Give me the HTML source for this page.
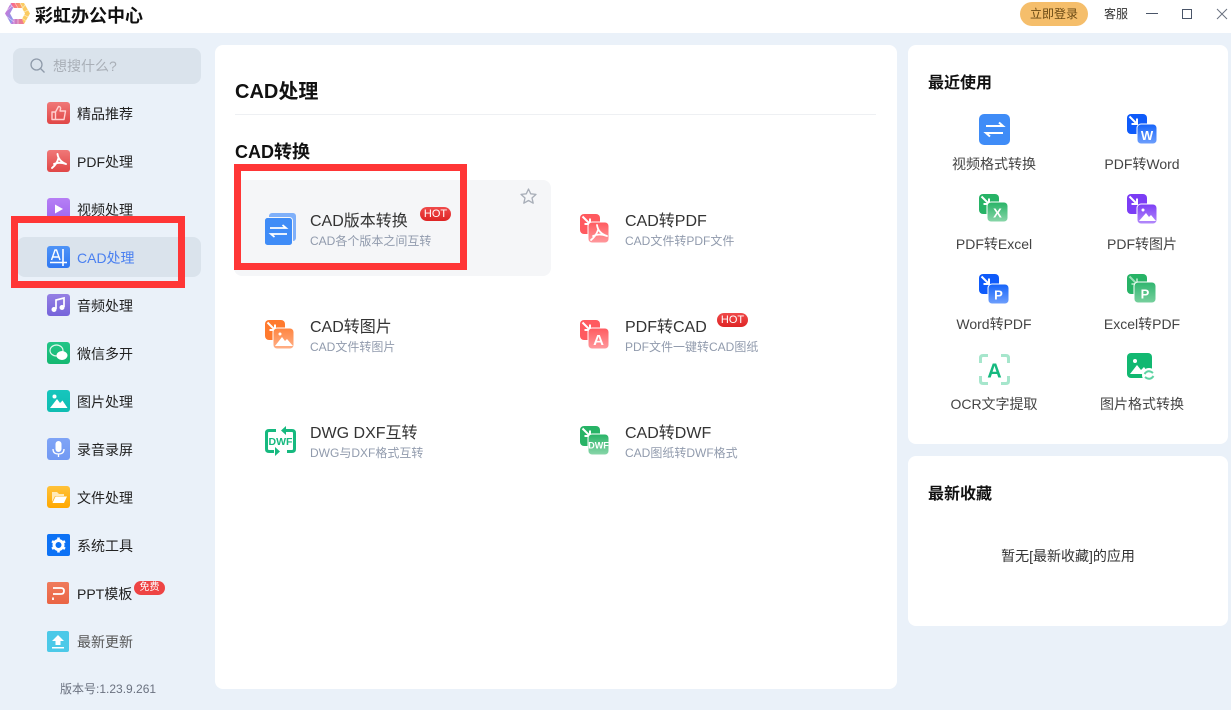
<!DOCTYPE html>
<html lang="zh-CN"><head><meta charset="utf-8"><title>彩虹办公中心</title>
<style>
*{box-sizing:border-box}
html,body{margin:0;padding:0}
body{width:1231px;height:710px;position:relative;overflow:hidden;background:#EAF1F9;font-family:"Liberation Sans","Noto Sans CJK SC",sans-serif;color:#222}
.a{position:absolute}
.t{position:absolute;white-space:nowrap;line-height:20px}
svg{position:absolute;display:block;overflow:visible}
svg text{font-family:"Liberation Sans",sans-serif;font-weight:700;text-anchor:middle}
.nav{left:77px;font-size:14px;color:#222}
.ti{font-size:16px;color:#333}
.su{font-size:12px;color:#919BAD}
.lb{font-size:14px;color:#444;width:148px;text-align:center}
.hot{position:absolute;width:31px;height:14px;border-radius:7px;background:linear-gradient(#F04A4A,#DE2424);color:#fff;font-size:11px;line-height:14px;text-align:center}
.panel{position:absolute;background:#fff;border-radius:8px}
.red{position:absolute;border:7px solid #FF3636}
</style></head><body>
<svg width="0" height="0" style="left:0;top:0"><defs>
<linearGradient id="g1" x1="0" x2="0" y1="0" y2="1"><stop offset="0" stop-color="#F07878"/><stop offset="1" stop-color="#E04646"/></linearGradient>
<linearGradient id="g2" x1="0" x2="0" y1="0" y2="1"><stop offset="0" stop-color="#B67FF5"/><stop offset="1" stop-color="#A066EE"/></linearGradient>
<linearGradient id="g3" x1="0" x2="0" y1="0" y2="1"><stop offset="0" stop-color="#4F94F7"/><stop offset="1" stop-color="#2F78F2"/></linearGradient>
<linearGradient id="g4" x1="0" x2="0" y1="0" y2="1"><stop offset="0" stop-color="#9580E4"/><stop offset="1" stop-color="#7664DA"/></linearGradient>
<linearGradient id="g5" x1="0" x2="0" y1="0" y2="1"><stop offset="0" stop-color="#22C588"/><stop offset="1" stop-color="#14B871"/></linearGradient>
<linearGradient id="g6" x1="0" x2="0" y1="0" y2="1"><stop offset="0" stop-color="#16C6BD"/><stop offset="1" stop-color="#0FBDB2"/></linearGradient>
<linearGradient id="g7" x1="0" x2="0" y1="0" y2="1"><stop offset="0" stop-color="#7FA4F6"/><stop offset="1" stop-color="#7299F3"/></linearGradient>
<linearGradient id="g8" x1="0" x2="0" y1="0" y2="1"><stop offset="0" stop-color="#FFC23A"/><stop offset="1" stop-color="#FFA800"/></linearGradient>
<linearGradient id="g9" x1="0" x2="0" y1="0" y2="1"><stop offset="0" stop-color="#EF7B5C"/><stop offset="1" stop-color="#EA6544"/></linearGradient>
<linearGradient id="g10" x1="0" x2="0" y1="0" y2="1"><stop offset="0" stop-color="#FF5A5F"/><stop offset="1" stop-color="#FF9A9E"/></linearGradient>
<linearGradient id="g11" x1="0" x2="0" y1="0" y2="1"><stop offset="0" stop-color="#FF8540"/><stop offset="1" stop-color="#FFB088"/></linearGradient>
<linearGradient id="g12" x1="0" x2="0" y1="0" y2="1"><stop offset="0" stop-color="#27B366"/><stop offset="1" stop-color="#8AD6AA"/></linearGradient>
<linearGradient id="g13" x1="0" x2="0" y1="0" y2="1"><stop offset="0" stop-color="#1463FA"/><stop offset="1" stop-color="#6FA0FC"/></linearGradient>
<linearGradient id="g14" x1="0" x2="0" y1="0" y2="1"><stop offset="0" stop-color="#7C3DF5"/><stop offset="1" stop-color="#B48CFA"/></linearGradient>
<linearGradient id="g15" x1="0" x2="0" y1="0" y2="1"><stop offset="0" stop-color="#30B56F"/><stop offset="1" stop-color="#78D09E"/></linearGradient>
<linearGradient id="lgL" x1="0" x2="1" y1="0" y2="1"><stop offset="0" stop-color="#E56BD0"/><stop offset="1" stop-color="#6FA5F2"/></linearGradient>
<linearGradient id="lgT" x1="0" x2="1" y1="0" y2="0"><stop offset="0" stop-color="#F65E9A"/><stop offset="1" stop-color="#FBA45A"/></linearGradient>
<linearGradient id="lgB" x1="0" x2="1" y1="0" y2="0"><stop offset="0" stop-color="#B77BEA"/><stop offset="1" stop-color="#F77D7D"/></linearGradient>
</defs></svg>
<div class="a" style="left:0;top:0;width:1231px;height:33px;background:#fff"></div>
<svg style="left:0;top:0" width="36" height="28">
<path d="M11 3L14 8L13 8L10 13.500L13 19L11 24L5 13.500Z" fill="url(#lgL)"/>
<path d="M11 3H20L22 8H13Z" fill="url(#lgT)"/>
<path d="M20 3H24L30 13.500L24 24L22 19L25 13.500L22 8Z" fill="#FBCB62"/>
<path d="M11 24L13 19H22L24 24Z" fill="url(#lgB)"/>
<path d="M6 16L14 22M5 12L12 6M10 4L14 8M15 3L18 8M20 3L23 8M25 5L22 9M28 10L24 12M28 17L24 15M26 21L22 18M18 19V24M14 19V24" stroke="#fff" stroke-width=".7" opacity=".6" fill="none"/>
</svg>
<div class="t" style="left:35px;top:6px;font-size:18px;font-weight:700;color:#111">彩虹办公中心</div>
<div class="a" style="left:1020px;top:2px;width:68px;height:24px;border-radius:12px;background:#F5BE6B;color:#6B4A14;font-size:12px;line-height:24px;text-align:center">立即登录</div>
<div class="t" style="left:1104px;top:4px;font-size:12px;color:#333">客服</div>
<div class="a" style="left:1146px;top:13px;width:12px;height:1px;background:#4A5568"></div>
<div class="a" style="left:1182px;top:9px;width:10px;height:10px;border:1px solid #4A5568"></div>
<svg style="left:1217px;top:9px" width="10" height="10"><path d="M0 0L10 10M10 0L0 10" stroke="#6B7280" stroke-width="1" fill="none"/></svg>

<div class="a" style="left:13px;top:48px;width:188px;height:36px;border-radius:8px;background:#DAE3EC"></div>
<svg style="left:30px;top:58px" width="15" height="15"><circle cx="6.500" cy="6.500" r="5.500" fill="none" stroke="#8F9BAA" stroke-width="1.300"/><path d="M10.500 10.500L14.500 14.500" stroke="#8F9BAA" stroke-width="1.300"/></svg>
<div class="t" style="left:53px;top:56px;font-size:14px;color:#A9AFB7">想搜什么?</div>

<div class="a" style="left:17px;top:237px;width:184px;height:40px;border-radius:8px;background:#DAE3EC"></div>

<svg style="left:47px;top:102px" width="23" height="22"><rect width="23" height="22" rx="3" fill="url(#g1)"/><path d="M5 10H8.500V17.500H5ZM8.500 10L11.500 4.500Q14 4.500 13.500 7L13 9H18.500L17 17.500H8.500" fill="none" stroke="#FFD0D0" stroke-width="1.400" stroke-linejoin="round"/></svg>
<div class="t nav" style="top:104px">精品推荐</div>
<svg style="left:47px;top:150px" width="23" height="22"><rect width="23" height="22" rx="3" fill="url(#g1)"/><path d="M10.500 4Q11.500 11 19 14M11.500 8Q10 14 5 18M7 14Q12 11.500 19 14" fill="none" stroke="#fff" stroke-width="1.900" stroke-linecap="round"/></svg>
<div class="t nav" style="top:152px">PDF处理</div>
<svg style="left:47px;top:198px" width="23" height="22"><rect width="23" height="22" rx="3" fill="url(#g2)"/><path d="M8 6.500L16 11L8 15.500Z" fill="#fff"/></svg>
<div class="t nav" style="top:200px">视频处理</div>
<svg style="left:47px;top:246px" width="23" height="22"><rect width="23" height="22" rx="3" fill="url(#g3)"/><path d="M3 16.500H20M16 3V20" stroke="#fff" stroke-width="1.600"/><path d="M4.500 14L8 4H9.500L13 14M5.800 11H11.700" fill="none" stroke="#fff" stroke-width="1.400"/></svg>
<div class="t nav" style="top:248px;color:#4A80F0">CAD处理</div>
<svg style="left:47px;top:294px" width="23" height="22"><rect width="23" height="22" rx="3" fill="url(#g4)"/><path d="M9 15V6L17 4V13" fill="none" stroke="#fff" stroke-width="1.700"/><circle cx="7" cy="15.500" r="2.500" fill="#fff"/><circle cx="15" cy="13.500" r="2.500" fill="#fff"/></svg>
<div class="t nav" style="top:296px">音频处理</div>
<svg style="left:47px;top:342px" width="23" height="22"><rect width="23" height="22" rx="3" fill="url(#g5)"/><ellipse cx="9.500" cy="8.500" rx="6.500" ry="5.500" fill="none" stroke="#DFF7EC" stroke-width="1.200"/><ellipse cx="15" cy="13.500" rx="5.500" ry="4.500" fill="#fff"/></svg>
<div class="t nav" style="top:344px">微信多开</div>
<svg style="left:47px;top:390px" width="23" height="22"><rect width="23" height="22" rx="3" fill="url(#g6)"/><circle cx="7.500" cy="6.500" r="2" fill="#fff"/><path d="M3 18L10 9L13 13L15.500 10.500L20.500 18Z" fill="#fff"/></svg>
<div class="t nav" style="top:392px">图片处理</div>
<svg style="left:47px;top:438px" width="23" height="22"><rect width="23" height="22" rx="3" fill="url(#g7)"/><rect x="8.500" y="3" width="6" height="11" rx="3" fill="#fff"/><path d="M6 11Q6 16 11.500 16Q17 16 17 11M11.500 16V19" fill="none" stroke="#fff" stroke-width="1.300"/></svg>
<div class="t nav" style="top:440px">录音录屏</div>
<svg style="left:47px;top:486px" width="23" height="22"><rect width="23" height="22" rx="3" fill="url(#g8)"/><path d="M5 16V6H10L12 8H17V10H8L5 16Z" fill="#FFE9B8"/><path d="M5.500 17L8.500 10.500H20L17 17Z" fill="#fff"/></svg>
<div class="t nav" style="top:488px">文件处理</div>
<svg style="left:47px;top:534px" width="23" height="22"><rect width="23" height="22" rx="2" fill="#0D72F5"/><circle cx="11.500" cy="11" r="4.500" fill="none" stroke="#fff" stroke-width="3"/><path d="M11.500 3.500V6.500M11.500 15.500V18.500M5 7.200L7.600 8.700M15.400 13.300L18 14.800M5 14.800L7.600 13.300M15.400 8.700L18 7.200" stroke="#fff" stroke-width="2.600"/></svg>
<div class="t nav" style="top:536px">系统工具</div>
<svg style="left:47px;top:582px" width="22" height="22"><rect width="22" height="22" rx="2" fill="url(#g9)"/><path d="M6 6H14Q17 6 17 9Q17 12 14 12H6M6 15.500V18" fill="none" stroke="#fff" stroke-width="1.800"/></svg>
<div class="t nav" style="top:584px">PPT模板</div>
<div class="a" style="left:134px;top:581px;width:31px;height:14px;border-radius:7px;background:#EE4444;color:#fff;font-size:10px;line-height:14px;text-align:center">免费</div>
<svg style="left:47px;top:631px" width="22" height="21"><rect width="22" height="21" rx="2" fill="#4CC9E8"/><path d="M11 4L17 10H13.500V14H8.500V10H5Z" fill="#fff"/><rect x="5" y="16" width="12" height="1.500" fill="#fff"/></svg>
<div class="t nav" style="top:632px;color:#555">最新更新</div>
<div class="t" style="left:60px;top:679px;font-size:12px;color:#6B7280">版本号:1.23.9.261</div>

<div class="panel" style="left:215px;top:45px;width:682px;height:644px"></div>
<div class="t" style="left:235px;top:82px;font-size:20px;font-weight:700;color:#111">CAD处理</div>
<div class="a" style="left:235px;top:114px;width:641px;height:1px;background:#EEF0F3"></div>
<div class="t" style="left:235px;top:142px;font-size:18px;font-weight:700;color:#111">CAD转换</div>

<div class="a" style="left:234px;top:180px;width:317px;height:96px;border-radius:8px;background:#F5F6F8"></div>
<svg style="left:520px;top:188px" width="17" height="16" viewBox="0 0 17 16"><path d="M8.500 1L10.700 5.800L16 6.400L12 10L13.200 15.200L8.500 12.500L3.800 15.200L5 10L1 6.400L6.300 5.800Z" fill="none" stroke="#A8AEB8" stroke-width="1.300" stroke-linejoin="round"/></svg>

<svg style="left:265px;top:213px" width="31" height="32"><rect x="4" y="0" width="27" height="28" rx="3" fill="#7FB0FA"/><rect x="-.5" y="4.500" width="28" height="28" rx="3" fill="#3F8CF7" stroke="#F5F6F8"/><path d="M5 15H21L17.500 12M22 21H6L9.500 24" fill="none" stroke="#fff" stroke-width="1.800"/></svg>
<div class="t ti" style="left:310px;top:212px">CAD版本转换</div>
<div class="t su" style="left:310px;top:231px">CAD各个版本之间互转</div>
<div class="hot" style="left:420px;top:207px">HOT</div>

<svg style="left:580px;top:214px" width="29" height="29"><rect width="20" height="20" rx="4" fill="#FF5A5F"/><path d="M2.500 2.500L10 10M10 4.500V10H4.500" fill="none" stroke="#fff" stroke-width="2"/><rect x="8" y="8" width="21" height="21" rx="4" fill="url(#g10)" stroke="#fff"/><path d="M17 11Q18 19 27 22M18 16Q16 22 11 26M13 22Q19 19 27 22" fill="none" stroke="#fff" stroke-width="1.800" stroke-linecap="round"/></svg>
<div class="t ti" style="left:625px;top:212px">CAD转PDF</div>
<div class="t su" style="left:625px;top:231px">CAD文件转PDF文件</div>

<svg style="left:265px;top:320px" width="29" height="29"><rect width="20" height="20" rx="4" fill="#FF7A2E"/><path d="M2.500 2.500L10 10M10 4.500V10H4.500" fill="none" stroke="#fff" stroke-width="2"/><rect x="8" y="8" width="21" height="21" rx="4" fill="url(#g11)" stroke="#fff"/><circle cx="15" cy="14" r="1.500" fill="#fff"/><path d="M10 26L17 17L20 21L22 19L28 26Z" fill="#fff"/></svg>
<div class="t ti" style="left:310px;top:318px">CAD转图片</div>
<div class="t su" style="left:310px;top:337px">CAD文件转图片</div>

<svg style="left:580px;top:320px" width="29" height="29"><rect width="20" height="20" rx="4" fill="#FF5A5F"/><path d="M2.500 2.500L10 10M10 4.500V10H4.500" fill="none" stroke="#fff" stroke-width="2"/><rect x="8" y="8" width="21" height="21" rx="4" fill="url(#g10)" stroke="#fff"/><text x="18.500" y="25" font-size="15" fill="#fff">A</text></svg>
<div class="t ti" style="left:625px;top:318px">PDF转CAD</div>
<div class="t su" style="left:625px;top:337px">PDF文件一键转CAD图纸</div>
<div class="hot" style="left:717px;top:313px">HOT</div>

<svg style="left:265px;top:426px" width="31" height="30"><path d="M11 4.500H4Q1.500 4.500 1.500 7V23Q1.500 25.500 4 25.500H9M20 4.500H27Q29.500 4.500 29.500 7V23Q29.500 25.500 27 25.500H22" fill="none" stroke="#16B97F" stroke-width="3"/><path d="M16 4.500L21 0V9ZM15 25.500L10 21V30Z" fill="#16B97F"/><text x="15.500" y="19" font-size="10.500" fill="#16B97F">DWF</text></svg>
<div class="t ti" style="left:310px;top:424px">DWG DXF互转</div>
<div class="t su" style="left:310px;top:443px">DWG与DXF格式互转</div>

<svg style="left:580px;top:426px" width="29" height="29"><rect width="20" height="20" rx="4" fill="#27B366"/><path d="M2.500 2.500L10 10M10 4.500V10H4.500" fill="none" stroke="#fff" stroke-width="2"/><rect x="8" y="8" width="21" height="21" rx="4" fill="url(#g12)" stroke="#fff"/><text x="18.500" y="22.500" font-size="9" fill="#fff">DWF</text></svg>
<div class="t ti" style="left:625px;top:424px">CAD转DWF</div>
<div class="t su" style="left:625px;top:443px">CAD图纸转DWF格式</div>

<div class="panel" style="left:908px;top:45px;width:320px;height:399px"></div>
<div class="t" style="left:928px;top:74px;font-size:16px;font-weight:700;color:#111">最近使用</div>

<svg style="left:979px;top:114px" width="31" height="31"><rect width="31" height="31" rx="5" fill="#3F8CF7"/><path d="M7 12H24L20 8.500M24 19H7L11 22.500" fill="none" stroke="#fff" stroke-width="2"/></svg>
<div class="t lb" style="left:920px;top:154px">视频格式转换</div>
<svg style="left:1127px;top:114px" width="30" height="30"><rect width="20" height="20" rx="4" fill="#0F5BFA"/><path d="M2.500 2.500L10 10M10 4.500V10H4.500" fill="none" stroke="#fff" stroke-width="2"/><rect x="10" y="10" width="20" height="20" rx="4" fill="url(#g13)" stroke="#fff"/><text x="20" y="26" font-size="13" fill="#fff">W</text></svg>
<div class="t lb" style="left:1068px;top:154px">PDF转Word</div>

<svg style="left:979px;top:194px" width="29" height="28"><rect width="20" height="20" rx="4" fill="#27B366"/><path d="M2.500 2.500L10 10M10 4.500V10H4.500" fill="none" stroke="#fff" stroke-width="2"/><rect x="8" y="8" width="21" height="20" rx="4" fill="url(#g12)" stroke="#fff"/><text x="18.500" y="23.500" font-size="13" fill="#fff">X</text></svg>
<div class="t lb" style="left:920px;top:234px">PDF转Excel</div>
<svg style="left:1127px;top:194px" width="30" height="30"><rect width="20" height="20" rx="4" fill="#7C3DF5"/><path d="M2.500 2.500L10 10M10 4.500V10H4.500" fill="none" stroke="#fff" stroke-width="2"/><rect x="10" y="10" width="20" height="20" rx="4" fill="url(#g14)" stroke="#fff"/><circle cx="16" cy="16" r="1.500" fill="#fff"/><path d="M12 27L19 19L22 23L24 21L29 27Z" fill="#fff"/></svg>
<div class="t lb" style="left:1068px;top:234px">PDF转图片</div>

<svg style="left:979px;top:274px" width="30" height="30"><rect width="20" height="20" rx="4" fill="#0F5BFA"/><path d="M2.500 2.500L10 10M10 4.500V10H4.500" fill="none" stroke="#fff" stroke-width="2"/><rect x="9" y="10" width="21" height="20" rx="4" fill="url(#g13)" stroke="#fff"/><text x="19.500" y="25.500" font-size="13" fill="#fff">P</text></svg>
<div class="t lb" style="left:920px;top:314px">Word转PDF</div>
<svg style="left:1127px;top:274px" width="29" height="29"><rect width="20" height="20" rx="4" fill="#27B366"/><path d="M2.500 2.500L10 10M10 4.500V10H4.500" fill="none" stroke="#9BE0B8" stroke-width="2"/><rect x="7" y="8" width="22" height="21" rx="4" fill="url(#g15)" stroke="#fff"/><text x="18" y="24.500" font-size="13" fill="#fff">P</text></svg>
<div class="t lb" style="left:1068px;top:314px">Excel转PDF</div>

<svg style="left:979px;top:354px" width="31" height="31"><path d="M1.500 9V4Q1.500 1.500 4 1.500H9M22 1.500H27Q29.500 1.500 29.500 4V9M29.500 22V27Q29.500 29.500 27 29.500H22M9 29.500H4Q1.500 29.500 1.500 27V22" fill="none" stroke="#A6E6CC" stroke-width="3"/><text x="15.500" y="23.500" font-size="20" fill="#16B97F">A</text></svg>
<div class="t lb" style="left:920px;top:394px">OCR文字提取</div>
<svg style="left:1127px;top:353px" width="29" height="29"><rect width="25" height="25" rx="4" fill="#12B871"/><circle cx="8" cy="8" r="2" fill="#fff"/><path d="M3 21L10 12L14 17L17 14L22 21Z" fill="#fff"/><circle cx="22" cy="22" r="7" fill="#fff"/><path d="M17.500 21Q21 16 26 20M26.500 23Q23 28 18 24" fill="none" stroke="#5FD3A3" stroke-width="2"/></svg>
<div class="t lb" style="left:1068px;top:394px">图片格式转换</div>

<div class="panel" style="left:908px;top:456px;width:320px;height:170px"></div>
<div class="t" style="left:928px;top:485px;font-size:16px;font-weight:700;color:#111">最新收藏</div>
<div class="t" style="left:908px;top:546px;width:320px;text-align:center;font-size:14px;color:#333">暂无[最新收藏]的应用</div>

<div class="red" style="left:11px;top:216px;width:174px;height:72px"></div>
<div class="red" style="left:234px;top:164px;width:233px;height:106px"></div>
</body></html>
